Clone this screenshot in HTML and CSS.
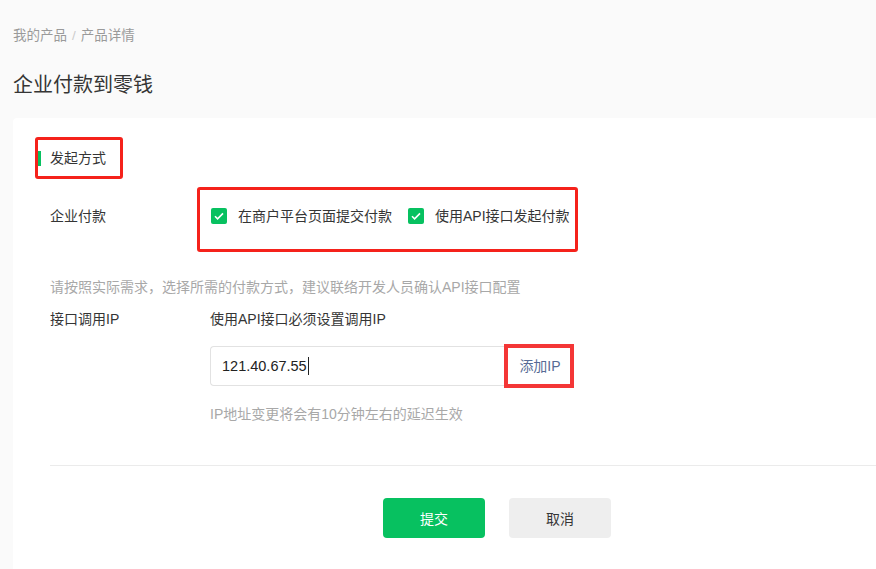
FILE: index.html
```html
<!DOCTYPE html>
<html>
<head>
	<meta charset="utf-8">
	<title>企业付款到零钱</title>
	<link rel="stylesheet" href="styles.css">
</head>
<body>
	<div class="breadcrumb">
		<span>我的产品</span><span class="sep">/</span><span>产品详情</span>
	</div>
	<h1 class="page-title">企业付款到零钱</h1>

	<div class="card">
		<div class="mark section-mark">
			<span class="section-title">发起方式</span>
		</div>

		<div class="row">
			<div class="label label-mark">企业付款</div>
			<div class="mark checks">
				<label class="check"><span class="box"><svg width="16" height="16" viewBox="0 0 16 16"><path d="M4 8.2l2.6 2.6L12 5.4" fill="none" stroke="#fff" stroke-width="1.6"/></svg></span>在商户平台页面提交付款</label>
				<label class="check"><span class="box"><svg width="16" height="16" viewBox="0 0 16 16"><path d="M4 8.2l2.6 2.6L12 5.4" fill="none" stroke="#fff" stroke-width="1.6"/></svg></span>使用API接口发起付款</label>
			</div>
		</div>

		<div class="hint">请按照实际需求，选择所需的付款方式，建议联络开发人员确认API接口配置</div>

		<div class="row ip-row">
			<div class="label">接口调用IP</div>
			<div class="control">
				<div class="desc">使用API接口必须设置调用IP</div>
				<div class="ip-line">
					<div class="input">121.40.67.55<span class="caret"></span></div>
					<div class="add-mark"><a class="add-ip">添加IP</a></div>
				</div>
				<div class="tip">IP地址变更将会有10分钟左右的延迟生效</div>
			</div>
		</div>

		<div class="divider"></div>

		<div class="actions">
			<button class="btn btn-primary">提交</button>
			<button class="btn btn-default">取消</button>
		</div>
	</div>
</body>
</html>
```

FILE: styles.css
```css
html, body {
	margin: 0;
	background: #fafafa;
	overflow: hidden;
}

body {
	font-family: "Liberation Sans", "Noto Sans CJK SC", sans-serif;
	font-size: 14px;
	color: #353535;
	padding-left: 13px;
}

.breadcrumb {
	margin-top: 26px;
	line-height: 20px;
	font-size: 13.5px;
	color: #9a9a9a;
}

.breadcrumb .sep {
	margin: 0 5px;
	color: #ccc;
}

.page-title {
	margin: 25px 0 0 0;
	font-size: 20px;
	font-weight: normal;
	line-height: 28px;
	color: #353535;
}

.card {
	margin-top: 19px;
	background: #fff;
	border-radius: 4px 0 0 0;
	padding: 19px 0 40px 22px;
	min-height: 420px;
}

.mark {
	border: 3px solid #f5221b;
	border-radius: 3px;
}

.section-mark {
	display: inline-block;
	padding: 10px 14px 10px 0;
}

.section-title {
	display: inline-block;
	border-left: 3px solid #07c160;
	padding-left: 9px;
	line-height: 15px;
	height: 15px;
}

.row {
	display: flex;
	margin-top: 8px;
}

.label {
	width: 147px;
	padding-left: 15px;
	line-height: 20px;
	flex-shrink: 0;
}

.label-mark {
	padding-top: 19px;
}

.checks {
	display: flex;
	padding: 16px 5px 23px 11px;
	line-height: 20px;
}

.check {
	display: flex;
	align-items: center;
	margin-right: 16px;
}

.check:last-child {
	margin-right: 0;
}

.box {
	width: 16px;
	height: 16px;
	background: #07c160;
	border-radius: 2px;
	margin-right: 11px;
	display: block;
}

.box svg {
	display: block;
}

.hint {
	margin-top: 25px;
	padding-left: 15px;
	line-height: 20px;
	color: #a8a8a8;
}

.ip-row {
	margin-top: 12px;
}

.ip-row .label {
	width: 160px;
}

.control {
	line-height: 20px;
}

.desc {
	color: #353535;
}

.ip-line {
	display: flex;
	align-items: center;
	margin-top: 15px;
}

.input {
	width: 282px;
	height: 38px;
	border: 1px solid #e2e2e2;
	border-right: none;
	border-radius: 4px 0 0 4px;
	padding-left: 11px;
	line-height: 38px;
	font-size: 14.5px;
	color: #222;
}

.caret {
	display: inline-block;
	width: 1px;
	height: 18px;
	background: #222;
	vertical-align: -4px;
	margin-left: 1px;
}

.add-mark {
	border: 4px solid #f43636;
	width: 62px;
	height: 36px;
	display: flex;
	align-items: center;
	justify-content: center;
}

.add-ip {
	color: #576b95;
	line-height: 20px;
	padding-left: 2px;
}

.tip {
	margin-top: 16px;
	color: #a8a8a8;
}

.divider {
	margin: 41px 0 0 15px;
	border-top: 1px solid #ebebeb;
}

.actions {
	display: flex;
	margin-top: 32px;
	padding-left: 348px;
}

.btn {
	width: 102px;
	height: 40px;
	border: none;
	border-radius: 4px;
	font-family: "Liberation Sans", "Noto Sans CJK SC", sans-serif;
	font-size: 14px;
	margin-right: 24px;
}

.btn-primary {
	background: #07c160;
	color: #fff;
}

.btn-default {
	background: #eeeeee;
	color: #353535;
}
```
